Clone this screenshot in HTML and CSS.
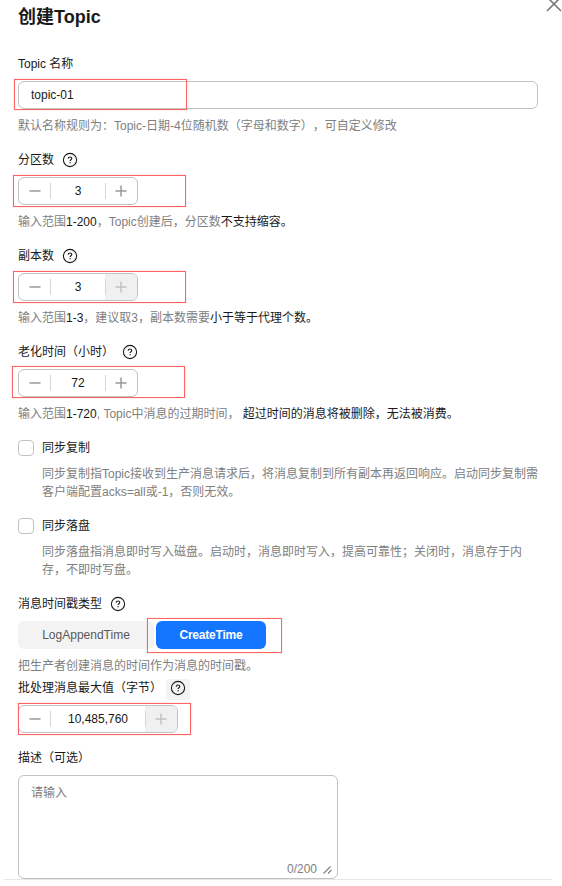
FILE: index.html
```html
<!DOCTYPE html>
<html lang="zh-CN">
<head>
<meta charset="utf-8">
<title>创建Topic</title>
<link rel="stylesheet" href="styles.css">
</head>
<body>
<svg class="defs" width="0" height="0">
  <symbol id="help" viewBox="0 0 16 16"><circle cx="8" cy="8" r="6.6"/><path d="M6.2 6.7C6.2 5.6 7 5 8 5s1.8.6 1.8 1.6c0 1.1-1.7 1.2-1.7 2.4"/><path d="M8.1 10.1v1.1"/></symbol>
  <symbol id="minus" viewBox="0 0 12 12"><path d="M.5 6h11"/></symbol>
  <symbol id="plus" viewBox="0 0 12 12"><path d="M.5 6h11M6 .5v11"/></symbol>
</svg>
<main class="panel">
  <svg class="close" viewBox="0 0 16 16"><path d="M1 1l14 14M15 1L1 15"/></svg>
  <h1 class="title">创建Topic</h1>

  <section class="field">
    <div class="label">Topic 名称</div>
    <div class="control"><div class="input">topic-01</div><i class="mark mark-name"></i></div>
    <p class="hint">默认名称规则为：Topic-日期-4位随机数（字母和数字），可自定义修改</p>
  </section>

  <section class="field">
    <div class="label">分区数<svg class="help"><use href="#help"/></svg></div>
    <div class="control">
      <div class="stepper"><span class="btn"><svg><use href="#minus"/></svg></span><span class="value">3</span><span class="btn"><svg><use href="#plus"/></svg></span></div>
      <i class="mark mark-count"></i>
    </div>
    <p class="hint">输入范围<b>1-200</b>，Topic创建后，分区数<b>不支持缩容。</b></p>
  </section>

  <section class="field">
    <div class="label">副本数<svg class="help"><use href="#help"/></svg></div>
    <div class="control">
      <div class="stepper"><span class="btn"><svg><use href="#minus"/></svg></span><span class="value">3</span><span class="btn off"><svg><use href="#plus"/></svg></span></div>
      <i class="mark mark-count"></i>
    </div>
    <p class="hint">输入范围<b>1-3</b>，建议取3，副本数需要<b>小于等于代理个数。</b></p>
  </section>

  <section class="field">
    <div class="label">老化时间（小时）<svg class="help"><use href="#help"/></svg></div>
    <div class="control">
      <div class="stepper"><span class="btn"><svg><use href="#minus"/></svg></span><span class="value">72</span><span class="btn"><svg><use href="#plus"/></svg></span></div>
      <i class="mark mark-age"></i>
    </div>
    <p class="hint">输入范围<b>1-720</b>, Topic中消息的过期时间， <b>超过时间的消息将被删除，无法被消费。</b></p>
  </section>

  <section class="option">
    <div class="check"><span class="box"></span>同步复制</div>
    <p class="desc">同步复制指Topic接收到生产消息请求后，将消息复制到所有副本再返回响应。启动同步复制需<br>客户端配置acks=all或-1，否则无效。</p>
  </section>
  <section class="option">
    <div class="check"><span class="box"></span>同步落盘</div>
    <p class="desc">同步落盘指消息即时写入磁盘。启动时，消息即时写入，提高可靠性；关闭时，消息存于内<br>存，不即时写盘。</p>
  </section>

  <section class="field tight">
    <div class="label">消息时间戳类型<svg class="help"><use href="#help"/></svg></div>
    <div class="control segments">
      <span class="segment">LogAppendTime</span><span class="segment active">CreateTime</span>
      <i class="mark mark-type"></i>
    </div>
    <p class="hint">把生产者创建消息的时间作为消息的时间戳。</p>
  </section>

  <section class="field last-step">
    <div class="label">批处理消息最大值（字节）<span class="hover"><svg class="help"><use href="#help"/></svg></span></div>
    <div class="control">
      <div class="stepper wide"><span class="btn"><svg><use href="#minus"/></svg></span><span class="value">10,485,760</span><span class="btn off"><svg><use href="#plus"/></svg></span></div>
      <i class="mark mark-max"></i>
    </div>
  </section>

  <section class="field">
    <div class="label">描述（可选）</div>
    <div class="textarea">
      <span>请输入</span>
      <div class="counter">0/200<svg viewBox="0 0 9 9"><path d="M.5 8.5l7-7M5 8.5l3.5-3.5"/></svg></div>
    </div>
  </section>
  <div class="rule"></div>
</main>
</body>
</html>
```
FILE: styles.css
```css
* { box-sizing: border-box; }
body {
  margin: 0;
  background: #fff;
  color: #191919;
  font: 12px/20px "Liberation Sans", "Noto Sans CJK SC", sans-serif;
  text-spacing-trim: space-all;
}
.defs { position: absolute; }
svg { fill: none; stroke: currentColor; }
.panel { position: relative; width: 562px; height: 886px; padding: 4px 24px 0 18px; overflow: hidden; }
.close { position: absolute; left: 546px; top: -4px; width: 16px; height: 16px; color: #777; stroke-width: 1.6; }
.title { margin: 0 0 24px; font-size: 18px; line-height: 26px; font-weight: 700; }
.field { margin-bottom: 14px; }
.tight { margin-bottom: 2px; }
.last-step { margin-bottom: 15px; }
.label { display: flex; align-items: center; height: 20px; margin-bottom: 7px; white-space: pre; }
.help { width: 16px; height: 16px; margin-left: 8px; stroke-width: 1.1; }
.hover { display: flex; align-items: center; width: 24px; height: 21px; margin: 2px 0 0 4px; padding-left: 4px; border-radius: 3px; background: #f3f3f3; }
.hover .help { margin: -2px 0 0; }
.control { position: relative; height: 28px; margin-bottom: 7px; }
.input { width: 520px; height: 28px; padding: 0 12px; border: 1px solid #c2c2c2; border-radius: 6px; line-height: 26px; }
.hint { margin: 0; height: 20px; color: #808080; white-space: nowrap; }
.hint b { font-weight: 400; color: #191919; }
.stepper { display: flex; width: 120px; height: 28px; border: 1px solid #c2c2c2; border-radius: 6px; overflow: hidden; line-height: 26px; }
.wide { width: 160px; }
.btn { display: flex; align-items: center; justify-content: center; width: 32px; color: #999; }
.btn svg { width: 12px; height: 12px; stroke-width: 1.5; }
.value { position: relative; z-index: 1; flex: 1; display: flex; align-items: center; justify-content: center; }
.value::before, .value::after { content: ""; width: 1px; height: 16px; background: #d6d6d6; }
.value::before { margin: 0 auto 0 -1px; }
.value::after { margin: 0 -1px 0 auto; }
.off { background: #f0f0f0; color: #c2c2c2; }
.mark { position: absolute; z-index: 2; border: 1px solid #ff6464; box-shadow: 0 0 1px rgba(255, 90, 90, .5); }
.mark-name { left: -4px; top: -2px; width: 173px; height: 31px; }
.mark-count { left: -5px; top: -2px; width: 173px; height: 32px; }
.mark-age { left: -6px; top: -3px; width: 173px; height: 32px; }
.mark-type { left: 129px; top: -3px; width: 135px; height: 35px; }
.mark-max { left: 0; top: -2px; width: 173px; height: 32px; }
.option { margin-bottom: 15px; }
.check { display: flex; align-items: center; gap: 8px; height: 20px; margin-bottom: 7px; }
.box { width: 16px; height: 16px; border: 1px solid #c2c2c2; border-radius: 4px; }
.desc { margin: 0 0 0 24px; color: #808080; line-height: 18px; white-space: nowrap; }
.segments { display: flex; gap: 2px; line-height: 28px; text-align: center; }
.segment { width: 136px; border-radius: 6px; background: #f3f3f3; color: #595959; }
.active { width: 110px; background: #1476ff; color: #fff; font-weight: 700; letter-spacing: -.2px; }
.textarea { display: flex; flex-direction: column; justify-content: space-between; width: 320px; height: 104px; padding: 7px 5px 0 12px; border: 1px solid #c2c2c2; border-radius: 6px; color: #808080; }
.counter { display: flex; align-items: center; justify-content: flex-end; gap: 6px; height: 18px; }
.counter svg { width: 9px; height: 9px; stroke-width: 1.1; }
.rule { position: absolute; left: 4px; top: 879px; width: 548px; height: 1px; background: #e6e6e6; }
```
